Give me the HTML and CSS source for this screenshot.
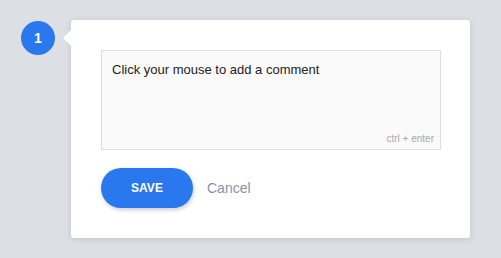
FILE: index.html
```html
<!DOCTYPE html>
<html lang="en">

<head>
    <meta charset="UTF-8">
    <title>Comment</title>
    <link rel="stylesheet" href="styles.css">
</head>

<body>
    <div class="row">
        <div class="badge">1</div>
        <div class="card">
            <div class="box">
                <div class="placeholder">Click your mouse to add a comment</div>
                <div class="hint">ctrl + enter</div>
            </div>
            <div class="actions">
                <button class="save">SAVE</button>
                <span class="cancel">Cancel</span>
            </div>
        </div>
    </div>
</body>

</html>
```

FILE: styles.css
```css
* {
    margin: 0px;
    box-sizing: border-box;
}

body {
    background: #dcdfe3;
    font-family: Arial, "Liberation Sans", sans-serif;
    width: 501px;
    height: 258px;
    overflow: hidden;
}

.row {
    display: flex;
    align-items: flex-start;
    padding: 20px 0 0 21px;
}

.badge {
    width: 34px;
    height: 34px;
    margin-top: 1px;
    border-radius: 50%;
    background: #2a78ee;
    color: white;
    font-weight: bold;
    font-size: 14px;
    display: flex;
    align-items: center;
    justify-content: center;
}

.card {
    position: relative;
    margin-left: 16px;
    width: 399px;
    height: 218px;
    background: white;
    border-radius: 3px;
    box-shadow: 0 1px 6px rgba(0, 0, 0, 0.12);
    padding: 30px 29px 0 30px;
}

.card::before {
    content: "";
    position: absolute;
    left: -8px;
    top: 10px;
    border-top: 8px solid transparent;
    border-bottom: 8px solid transparent;
    border-right: 8px solid white;
}

.box {
    height: 100px;
    border: 1px solid #dddddd;
    background: #fafafa;
    padding: 11px 10px 0 10px;
    display: flex;
    flex-direction: column;
}

.placeholder {
    font-size: 13px;
    color: #222;
    flex: 1;
}

.hint {
    font-size: 10px;
    color: #a8a8a8;
    text-align: right;
    margin: 0 -4px 5px 0;
}

.actions {
    display: flex;
    align-items: center;
    margin-top: 18px;
}

.save {
    width: 92px;
    height: 40px;
    border: none;
    border-radius: 20px;
    background: #2a78ee;
    color: white;
    font-family: Arial, "Liberation Sans", sans-serif;
    font-weight: bold;
    font-size: 12px;
    box-shadow: 1px 2px 4px rgba(0, 0, 0, 0.2);
}

.cancel {
    margin-left: 14px;
    font-size: 14px;
    color: #8793a5;
}
```
